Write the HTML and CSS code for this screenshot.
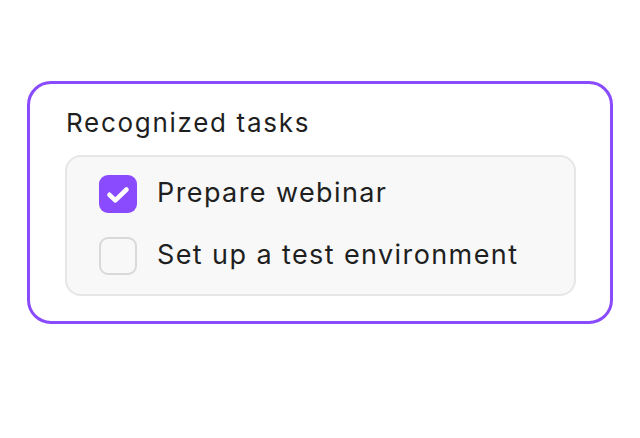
FILE: index.html
```html
<!DOCTYPE html>
<html>
<head>
<meta charset="utf-8">
<link rel="stylesheet" href="styles.css">
</head>
<body>
<div class="card">
  <div class="title">Recognized tasks</div>
  <div class="list">
    <div class="row">
      <span class="box checked">
        <svg viewBox="0 0 38 38" width="38" height="38"><path d="M10.5 19.8 L16.3 25.3 L27.5 14.5" fill="none" stroke="#fff" stroke-width="4.6" stroke-linecap="round" stroke-linejoin="round"/></svg>
      </span>
      <span class="label">Prepare webinar</span>
    </div>
    <div class="row">
      <span class="box"></span>
      <span class="label">Set up a test environment</span>
    </div>
  </div>
</div>
</body>
</html>
```
FILE: styles.css
```css
html, body { margin: 0; padding: 0; background: #fff; }
body {
  font-family: Inter, "Noto Sans", sans-serif;
  color: #1f1f1f;
  padding: 81px 0 0 27px;
}
.card {
  box-sizing: border-box;
  width: 586px;
  height: 243px;
  border: 3px solid #8a4bff;
  border-radius: 24px;
  padding: 19px 34px 25px 35px;
}
.title {
  font-size: 26px;
  line-height: 40px;
  letter-spacing: 1.7px;
  margin-left: 1px;
  margin-bottom: 12px;
}
.list {
  box-sizing: border-box;
  background: #f8f8f8;
  border: 2px solid #e6e6e6;
  border-radius: 16px;
  padding: 18px 32px 19px 32px;
  display: flex;
  flex-direction: column;
  gap: 24px;
}
.row {
  display: flex;
  align-items: center;
  gap: 20px;
  height: 38px;
}
.box {
  box-sizing: border-box;
  width: 38px;
  height: 38px;
  border-radius: 9px;
  border: 2px solid #d9d9d9;
  background: #f8f8f8;
  flex: none;
  display: flex;
}
.box.checked {
  background: #8a4bff;
  border: none;
}
.label {
  font-size: 27px;
  line-height: 38px;
  letter-spacing: 1.4px;
  margin-top: -3px;
}
```
